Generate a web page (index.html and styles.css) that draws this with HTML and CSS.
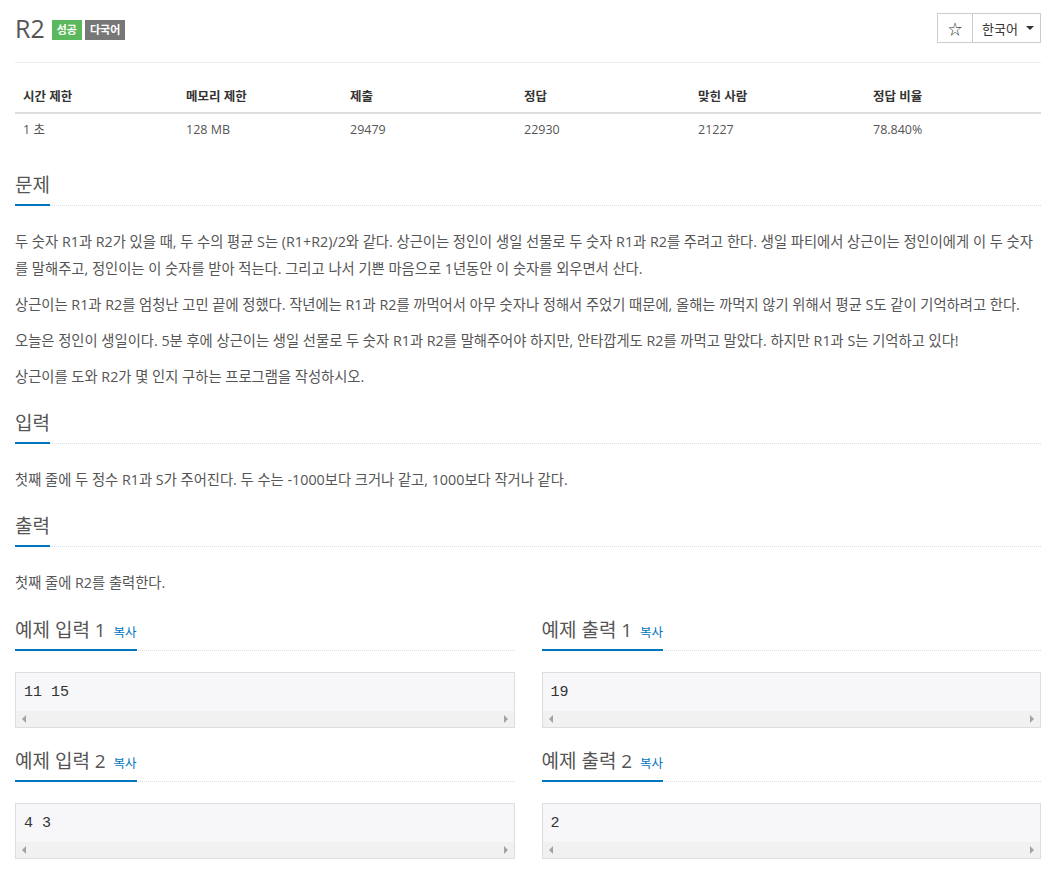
FILE: index.html
```html
<!DOCTYPE html>
<html lang="ko">
<head>
<meta charset="utf-8">
<title>R2</title>
<link rel="stylesheet" href="styles.css">
</head>
<body>
<div class="page">
  <div class="page-header">
    <div class="title-wrap">
      <h1 class="title">R2</h1>
      <span class="badge badge-success">성공</span>
      <span class="badge badge-gray">다국어</span>
    </div>
    <div class="btn-group">
      <span class="btn btn-star">☆</span>
      <span class="btn btn-lang">한국어 <span class="caret"></span></span>
    </div>
  </div>

  <table class="info">
    <thead>
      <tr><th>시간 제한</th><th>메모리 제한</th><th>제출</th><th>정답</th><th>맞힌 사람</th><th>정답 비율</th></tr>
    </thead>
    <tbody>
      <tr><td>1 초</td><td>128 MB</td><td>29479</td><td>22930</td><td>21227</td><td>78.840%</td></tr>
    </tbody>
  </table>

  <section class="section first">
    <div class="headline"><h2>문제</h2></div>
    <p>두 숫자 R1과 R2가 있을 때, 두 수의 평균 S는 (R1+R2)/2와 같다. 상근이는 정인이 생일 선물로 두 숫자 R1과 R2를 주려고 한다. 생일 파티에서 상근이는 정인이에게 이 두 숫자를 말해주고, 정인이는 이 숫자를 받아 적는다. 그리고 나서 기쁜 마음으로 1년동안 이 숫자를 외우면서 산다.</p>
    <p>상근이는 R1과 R2를 엄청난 고민 끝에 정했다. 작년에는 R1과 R2를 까먹어서 아무 숫자나 정해서 주었기 때문에, 올해는 까먹지 않기 위해서 평균 S도 같이 기억하려고 한다.</p>
    <p>오늘은 정인이 생일이다. 5분 후에 상근이는 생일 선물로 두 숫자 R1과 R2를 말해주어야 하지만, 안타깝게도 R2를 까먹고 말았다. 하지만 R1과 S는 기억하고 있다!</p>
    <p>상근이를 도와 R2가 몇 인지 구하는 프로그램을 작성하시오.</p>
  </section>

  <section class="section">
    <div class="headline"><h2>입력</h2></div>
    <p>첫째 줄에 두 정수 R1과 S가 주어진다. 두 수는 -1000보다 크거나 같고, 1000보다 작거나 같다.</p>
  </section>

  <section class="section">
    <div class="headline"><h2>출력</h2></div>
    <p>첫째 줄에 R2를 출력한다.</p>
  </section>

  <div class="samples">
    <div class="sample">
      <div class="headline"><h2>예제 입력 1 <a class="copy">복사</a></h2></div>
      <div class="box"><pre>11 15</pre><div class="hscroll"><span class="arr left"></span><span class="arr right"></span></div></div>
    </div>
    <div class="sample">
      <div class="headline"><h2>예제 출력 1 <a class="copy">복사</a></h2></div>
      <div class="box"><pre>19</pre><div class="hscroll"><span class="arr left"></span><span class="arr right"></span></div></div>
    </div>
    <div class="sample">
      <div class="headline"><h2>예제 입력 2 <a class="copy">복사</a></h2></div>
      <div class="box"><pre>4 3</pre><div class="hscroll"><span class="arr left"></span><span class="arr right"></span></div></div>
    </div>
    <div class="sample">
      <div class="headline"><h2>예제 출력 2 <a class="copy">복사</a></h2></div>
      <div class="box"><pre>2</pre><div class="hscroll"><span class="arr left"></span><span class="arr right"></span></div></div>
    </div>
  </div>
</div>
</body>
</html>
```

FILE: styles.css
```css
html, body {
  margin: 0;
  padding: 0;
  background: #fff;
}
body {
  font-family: "Open Sans", "Noto Sans CJK KR", sans-serif;
  color: #555;
  font-size: 15px;
}
.page {
  padding: 0 16px 0 15px;
}
.page-header {
  display: flex;
  justify-content: space-between;
  align-items: center;
  padding-top: 13px;
  padding-bottom: 19px;
  border-bottom: 1px solid #eee;
}
.title-wrap {
  display: flex;
  align-items: center;
  height: 29px;
}
.title {
  margin: 0 7px 0 0;
  font-size: 25px;
  font-weight: 400;
  line-height: 29px;
  color: #555;
}
.badge {
  display: inline-block;
  height: 20px;
  line-height: 20px;
  padding: 0 5px;
  font-size: 11px;
  font-weight: 700;
  color: #fff;
  margin-top: 4px;
  margin-right: 3px;
}
.badge-success { background: #5cb85c; }
.badge-gray { background: #777; }
.btn-group {
  display: flex;
  border: 1px solid #ccc;
  height: 28px;
}
.btn {
  display: flex;
  align-items: center;
  font-size: 13px;
  color: #333;
}
.btn-star {
  width: 34px;
  justify-content: center;
  border-right: 1px solid #ccc;
  font-size: 14px;
}
.btn-lang {
  width: 67px;
  padding-left: 9px;
  box-sizing: border-box;
}
.caret {
  display: inline-block;
  width: 0;
  height: 0;
  margin-left: 8px;
  border-top: 4px solid #333;
  border-left: 4px solid transparent;
  border-right: 4px solid transparent;
}
.info {
  width: 100%;
  margin-top: 17px;
  border-collapse: collapse;
  table-layout: fixed;
  font-size: 12.5px;
}
.info th:nth-child(1) { width: 147px; }
.info th:nth-child(2) { width: 148px; }
.info th:nth-child(3) { width: 158px; }
.info th:nth-child(4) { width: 158px; }
.info th:nth-child(5) { width: 159px; }
.info th, .info td {
  text-align: left;
  padding: 6px 8px;
  line-height: 20px;
}
.info th {
  padding-top: 7px;
  padding-bottom: 5px;
  font-weight: 700;
  color: #333;
  border-bottom: 2px solid #ddd;
}
.info td {
  color: #555;
}
.section.first {
  margin-top: 26px;
}
.section {
  margin-top: 20px;
}
.headline {
  display: flex;
  border-bottom: 1px dotted #dde1e6;
  margin-bottom: 22px;
}
.headline h2 {
  margin: 0 0 -1px 0;
  font-size: 19px;
  font-weight: 400;
  line-height: 27px;
  height: 27px;
  padding-bottom: 5px;
  border-bottom: 2px solid #0076c0;
  color: #555;
  white-space: nowrap;
}
.section p {
  margin: 0 0 9px 0;
  line-height: 27px;
  font-size: 14.3px;
}
.section p:last-child {
  margin-bottom: 0;
}
.copy {
  font-size: 12.5px;
  line-height: 1;
  color: #0076c0;
  margin-left: 3px;
  cursor: pointer;
}
.samples {
  margin-top: 21px;
  display: grid;
  grid-template-columns: 1fr 1fr;
  column-gap: 27px;
}
.sample {
  margin-bottom: 20px;
}
.sample .headline {
  margin-bottom: 21px;
}
.box {
  border: 1px solid #dcdde3;
  background: #f7f7f9;
}
.box pre {
  margin: 0;
  padding: 10px 8px 8px;
  font-family: "Liberation Mono", "DejaVu Sans Mono", monospace;
  font-size: 15px;
  line-height: 20px;
  color: #333;
}
.hscroll {
  height: 16px;
  background: #f1f1f1;
  display: flex;
  justify-content: space-between;
  align-items: center;
  padding: 0 6px;
}
.arr {
  width: 0;
  height: 0;
  border-top: 4px solid transparent;
  border-bottom: 4px solid transparent;
}
.arr.left { border-right: 4px solid #a3a3a3; }
.arr.right { border-left: 4px solid #a3a3a3; }
```
